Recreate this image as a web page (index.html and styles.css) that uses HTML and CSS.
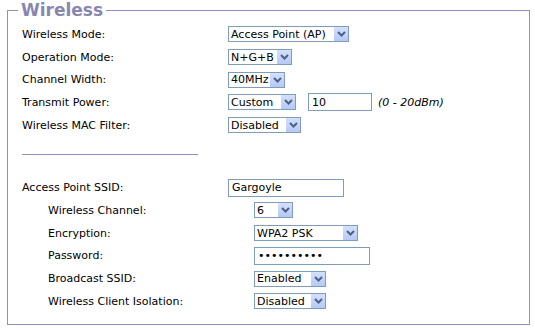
FILE: index.html
```html
<!DOCTYPE html>
<html>
<head>
    <meta charset="UTF-8">
    <title>Wireless</title>
    <link rel="stylesheet" href="styles.css">
</head>
<body>
    <fieldset class="section">
        <legend class="section-title">Wireless</legend>

        <div class="row">
            <label class="label">Wireless Mode:</label>
            <span class="select-wrap w-mode">
                <select><option>Access Point (AP)</option></select>
                <span class="arrow"><svg width="9" height="6" viewBox="0 0 9 6"><path d="M1 1 L4.5 4.5 L8 1" fill="none" stroke="#4d6185" stroke-width="2"/></svg></span>
            </span>
        </div>
        <div class="row">
            <label class="label">Operation Mode:</label>
            <span class="select-wrap w-op">
                <select><option>N+G+B</option></select>
                <span class="arrow"><svg width="9" height="6" viewBox="0 0 9 6"><path d="M1 1 L4.5 4.5 L8 1" fill="none" stroke="#4d6185" stroke-width="2"/></svg></span>
            </span>
        </div>
        <div class="row">
            <label class="label">Channel Width:</label>
            <span class="select-wrap w-width">
                <select><option>40MHz</option></select>
                <span class="arrow"><svg width="9" height="6" viewBox="0 0 9 6"><path d="M1 1 L4.5 4.5 L8 1" fill="none" stroke="#4d6185" stroke-width="2"/></svg></span>
            </span>
        </div>
        <div class="row">
            <label class="label">Transmit Power:</label>
            <span class="select-wrap w-power">
                <select><option>Custom</option></select>
                <span class="arrow"><svg width="9" height="6" viewBox="0 0 9 6"><path d="M1 1 L4.5 4.5 L8 1" fill="none" stroke="#4d6185" stroke-width="2"/></svg></span>
            </span>
            <input class="text-input w-txpower" type="text" value="10">
            <em class="hint">(0 - 20dBm)</em>
        </div>
        <div class="row">
            <label class="label">Wireless MAC Filter:</label>
            <span class="select-wrap w-mac">
                <select><option>Disabled</option></select>
                <span class="arrow"><svg width="9" height="6" viewBox="0 0 9 6"><path d="M1 1 L4.5 4.5 L8 1" fill="none" stroke="#4d6185" stroke-width="2"/></svg></span>
            </span>
        </div>

        <div class="divider"></div>

        <div class="row">
            <label class="label">Access Point SSID:</label>
            <input class="text-input w-ssid" type="text" value="Gargoyle">
        </div>
        <div class="row indent">
            <label class="label">Wireless Channel:</label>
            <span class="select-wrap w-channel">
                <select><option>6</option></select>
                <span class="arrow"><svg width="9" height="6" viewBox="0 0 9 6"><path d="M1 1 L4.5 4.5 L8 1" fill="none" stroke="#4d6185" stroke-width="2"/></svg></span>
            </span>
        </div>
        <div class="row indent">
            <label class="label">Encryption:</label>
            <span class="select-wrap w-enc">
                <select><option>WPA2 PSK</option></select>
                <span class="arrow"><svg width="9" height="6" viewBox="0 0 9 6"><path d="M1 1 L4.5 4.5 L8 1" fill="none" stroke="#4d6185" stroke-width="2"/></svg></span>
            </span>
        </div>
        <div class="row indent">
            <label class="label">Password:</label>
            <input class="text-input w-pass" type="password" value="gargoyle12">
        </div>
        <div class="row indent">
            <label class="label">Broadcast SSID:</label>
            <span class="select-wrap w-bcast">
                <select><option>Enabled</option></select>
                <span class="arrow"><svg width="9" height="6" viewBox="0 0 9 6"><path d="M1 1 L4.5 4.5 L8 1" fill="none" stroke="#4d6185" stroke-width="2"/></svg></span>
            </span>
        </div>
        <div class="row indent">
            <label class="label">Wireless Client Isolation:</label>
            <span class="select-wrap w-iso">
                <select><option>Disabled</option></select>
                <span class="arrow"><svg width="9" height="6" viewBox="0 0 9 6"><path d="M1 1 L4.5 4.5 L8 1" fill="none" stroke="#4d6185" stroke-width="2"/></svg></span>
            </span>
        </div>
    </fieldset>
</body>
</html>
```

FILE: styles.css
```css
body {
    font-family: "DejaVu Sans", Verdana, sans-serif;
    font-size: 11px;
    color: #000000;
    background-color: #ffffff;
    margin: 0;
    padding: 0;
}

.section {
    margin: 0 5px 0 7px;
    padding: 3px 0 0 14px;
    height: 325px;
    box-sizing: border-box;
    border: 1px solid #9090c0;
}

.section-title {
    font-size: 17px;
    font-weight: bold;
    color: #8787b0;
    padding: 0 3px;
    margin-left: -4px;
    line-height: 20px;
}

.row {
    display: flex;
    align-items: center;
    height: 22.7px;
}

.row.indent {
    padding-left: 26px;
}

.label {
    width: 206px;
    flex-shrink: 0;
}

.select-wrap {
    position: relative;
    display: inline-block;
    height: 16px;
}

.select-wrap select {
    -webkit-appearance: none;
    appearance: none;
    font-family: inherit;
    font-size: 11px;
    color: #000000;
    background-color: #ffffff;
    border: 1px solid #7f9db9;
    border-radius: 0;
    height: 16px;
    width: 100%;
    padding: 0 0 0 2px;
    margin: 0;
    box-sizing: border-box;
    outline: none;
}

.select-wrap .arrow {
    position: absolute;
    top: 1px;
    right: 1px;
    width: 14px;
    height: 14px;
    background: linear-gradient(#d3e0fd, #b6c9f6);
    display: flex;
    align-items: center;
    justify-content: center;
    pointer-events: none;
}

.text-input {
    font-family: inherit;
    font-size: 11px;
    color: #000000;
    border: 1px solid #7f9db9;
    height: 18px;
    padding: 0 3px;
    margin: 0;
    box-sizing: border-box;
    outline: none;
}

.hint {
    margin-left: 6px;
    font-size: 11px;
}

.divider {
    width: 176px;
    height: 1px;
    background-color: #9090c0;
    margin: 18px 0 21px 0;
}

.w-mode { width: 121px; }
.w-op { width: 64px; }
.w-width { width: 57px; }
.w-power { width: 68px; }
.w-txpower { width: 64px; margin-left: 12px; }
.w-mac { width: 73px; }
.w-ssid { width: 116px; }
.w-channel { width: 39px; }
.w-enc { width: 104px; }
.w-pass { width: 116px; }
.w-bcast { width: 72px; }
.w-iso { width: 72px; }
```
